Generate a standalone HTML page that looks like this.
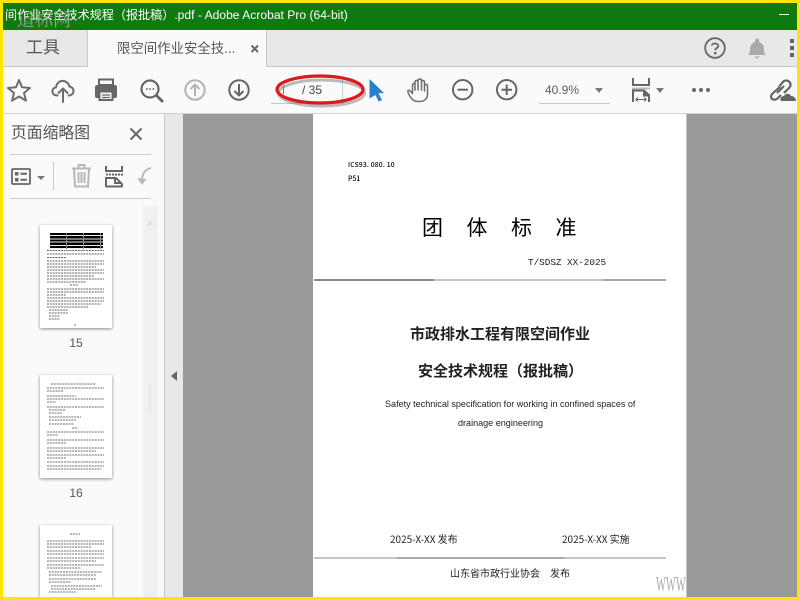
<!DOCTYPE html>
<html lang="zh"><head><meta charset="utf-8"><style>
html,body{margin:0;padding:0;width:800px;height:600px;overflow:hidden;background:#fff}
body{position:relative;font-family:"Liberation Sans","Noto Sans CJK SC",sans-serif;color:#444}
.a{position:absolute;white-space:nowrap}
svg.a{overflow:visible}
.ic{fill:none;stroke:#6d6d6d;stroke-width:2;stroke-linecap:round;stroke-linejoin:round}
</style></head><body>
<!-- base regions -->
<div class="a" style="left:3px;top:3px;width:794px;height:27px;background:#107a10"></div>
<div class="a" style="left:3px;top:30px;width:794px;height:37px;background:#e8e8e8;border-bottom:0"></div>
<div class="a" style="left:3px;top:66px;width:794px;height:1px;background:#c8c8c8"></div>
<div class="a" style="left:3px;top:67px;width:794px;height:46px;background:#fafafa"></div>
<div class="a" style="left:3px;top:113px;width:794px;height:1px;background:#d0d0d0"></div>
<div class="a" style="left:3px;top:114px;width:161px;height:486px;background:#fafafa"></div>
<div class="a" style="left:164px;top:114px;width:1px;height:486px;background:#c8c8c8"></div>
<div class="a" style="left:165px;top:114px;width:18px;height:486px;background:#e8e8e8"></div>
<div class="a" style="left:183px;top:114px;width:614px;height:486px;background:#999"></div>
<div class="a" style="left:313px;top:114px;width:373px;height:486px;background:#fff"></div>
<div class="a" style="left:686px;top:114px;width:1px;height:486px;background:#c4c4c4"></div>

<!-- title -->
<div class="a" style="left:5px;top:5px;width:500px;height:20px;overflow:hidden;font-size:12.100px;line-height:20px;color:#fff">间作业安全技术规程（报批稿）.pdf - Adobe Acrobat Pro (64-bit)</div>
<div class="a" style="left:17px;top:7px;font-size:18px;line-height:24px;color:#a3ada3;opacity:.85;font-family:'Noto Serif CJK SC',serif">道标网</div>
<div class="a" style="left:779px;top:14px;width:10px;height:1px;background:#fff"></div>

<!-- tabs -->
<div class="a" style="left:87px;top:30px;width:180px;height:37px;background:#fafafa;border-left:1px solid #c8c8c8;border-right:1px solid #c8c8c8;box-sizing:border-box"></div>
<div class="a" style="left:26px;top:37px;font-size:17px;line-height:22px;color:#555">工具</div>
<div class="a" style="left:117px;top:39px;font-size:13.4px;line-height:20px;color:#555">限空间作业安全技...</div>
<svg class="a" style="left:250px;top:44px" width="10" height="10"><path d="M1.500 1.500L8 8M8 1.500L1.500 8" stroke="#666" stroke-width="2"/></svg>
<!-- help, bell, dots -->
<svg class="a" style="left:703px;top:36px" width="24" height="24"><circle cx="12" cy="12" r="9.800" fill="none" stroke="#666" stroke-width="1.800"/><path d="M8.800 9.500C9 7 15.300 6.600 15.300 10C15.300 12 12.200 12 12.200 14.300" fill="none" stroke="#666" stroke-width="1.800"/><rect x="11" y="16" width="2.400" height="2.400" fill="#666"/></svg>
<svg class="a" style="left:746px;top:37px" width="22" height="22"><path d="M2 18C4.500 16 4 12.500 4.500 9.500C5 7 7.500 5.500 9 5V3.500C9 1 13 1 13 3.500V5C14.500 5.500 17 7 17.500 9.500C18 12.500 17.500 16 20 18Z" fill="#aaa"/><path d="M8 19.500H14L11 21.500Z" fill="#aaa"/></svg>
<div class="a" style="left:790px;top:39px;width:4px;height:4px;background:#666"></div>
<div class="a" style="left:790px;top:46px;width:4px;height:4px;background:#666"></div>
<div class="a" style="left:790px;top:53px;width:4px;height:4px;background:#666"></div>

<!-- toolbar icons -->
<svg class="a ic" style="left:7px;top:78px" width="25" height="24"><path d="M12 2L15 9.300L23 10L17 15L19 22.700L12 18.500L5 22.700L7 15L1 10L9 9.300Z"/></svg>
<svg class="a ic" style="left:51px;top:78px" width="24" height="24"><path d="M6.500 17.500C2.500 17.500 1 15 1.500 12.500C2 10.500 3.500 9.500 5 9.500C5.500 5 9 2.500 12.500 3C16 3.500 18 6 18.300 8.500C21 8.800 22.800 11 22.500 13.500C22.200 16 20 17.500 17.500 17.500"/><path d="M12 24V11M7.500 15L12 10.500L16.500 15"/></svg>
<svg class="a" style="left:94px;top:78px" width="24" height="24"><path d="M5 1.500H19V7H5Z" fill="none" stroke="#666" stroke-width="2"/><path d="M3 7H21Q23 7 23 9.500V18Q23 20 21 20H19V15H5V20H3Q1 20 1 18V9.500Q1 7 3 7Z" fill="#666"/><path d="M5.500 13.500H18.500V22H5.500Z" fill="#fafafa" stroke="#666" stroke-width="2"/><path d="M8 17H16M8 19.500H16" stroke="#666" stroke-width="1.300"/></svg>
<svg class="a" style="left:140px;top:79px" width="24" height="24"><circle cx="10" cy="10" r="8.500" fill="none" stroke="#666" stroke-width="2.200"/><path d="M16 16L23 23" stroke="#666" stroke-width="2.800"/><path d="M6 10H7.500M9.300 10H10.800M12.600 10H14.100" stroke="#666" stroke-width="1.800"/></svg>
<svg class="a" style="left:184px;top:79px" width="22" height="22" fill="none" stroke="#b4b4b4" stroke-width="2"><circle cx="11" cy="11" r="9.700"/><path d="M11 17V5.500M6.500 10L11 5.500L15.500 10"/></svg>
<svg class="a" style="left:228px;top:79px" width="22" height="22" fill="none" stroke="#666" stroke-width="2"><circle cx="11" cy="11" r="9.700"/><path d="M11 5V16.500M6.500 12L11 16.500L15.500 12"/></svg>

<!-- page box -->
<div class="a" style="left:271px;top:103px;width:72px;height:1px;background:#c8c8c8"></div>
<div class="a" style="left:342px;top:79px;width:1px;height:24px;background:#d0d0d0"></div>
<div class="a" style="left:283px;top:85px;width:1px;height:9px;background:#778"></div>
<div class="a" style="left:302px;top:81px;font-size:12px;line-height:18px;color:#444">/ 35</div>
<svg class="a" style="left:270px;top:72px" width="100" height="40"><ellipse cx="50" cy="18.500" rx="43" ry="13" fill="none" stroke="#777" stroke-width="3" opacity=".5" transform="translate(1.500 2.500)"/><ellipse cx="50" cy="17.500" rx="43" ry="13.500" fill="none" stroke="#e0171c" stroke-width="3.200"/></svg>
<svg class="a" style="left:368px;top:78px" width="18" height="24"><path d="M1.500 1L16 15L10.500 15.300L14 22L10.500 23.500L7.500 17L1.500 20.500Z" fill="#2a7fd0"/></svg>

<svg class="a" style="left:407px;top:78px" width="24" height="24" fill="none" stroke="#6d6d6d" stroke-width="1.500" stroke-linecap="round" stroke-linejoin="round"><path d="M5.500 15.500C4 13.500 2 11.500 1 12.500C.3 13.500 2.500 18.500 5 21C6.500 23 9 23.500 12 23.500C17 23.500 20.500 21 20.500 16.500V8C20.500 5.800 17.500 5.800 17.500 8V4C17.500 2 14.500 2 14.500 4V2.500C14.500 .5 11 .5 11 2.500V4C11 2 8 2 8 4V7C8 5 5.500 5 5.500 7ZM8 4V12M11 3V12M14.500 3V12M17.500 7V13"/></svg>
<svg class="a" style="left:452px;top:79px" width="22" height="22" fill="none" stroke="#666" stroke-width="2"><circle cx="10.700" cy="10.700" r="9.700"/><path d="M5.500 10.700H16"/></svg>
<svg class="a" style="left:496px;top:79px" width="22" height="22" fill="none" stroke="#666" stroke-width="2"><circle cx="10.700" cy="10.700" r="9.700"/><path d="M5.500 10.700H16M10.700 5.500V16"/></svg>
<div class="a" style="left:545px;top:81px;font-size:12px;line-height:18px;color:#5a5a6a">40.9%</div>
<div class="a" style="left:539px;top:103px;width:71px;height:1px;background:#c8c8c8"></div>
<div class="a" style="left:595px;top:88px;width:0;height:0;border-left:4px solid transparent;border-right:4px solid transparent;border-top:5px solid #777"></div>
<svg class="a" style="left:632px;top:77px" width="22" height="26" fill="none" stroke="#666" stroke-width="2"><path d="M1 1V8H17V1"/><path d="M0 11.500H18" stroke="#bbb"/><path d="M1 25V13.500H12L17 18V25"/><path d="M12 13.500V18.500H17" fill="#666"/><path d="M3.500 22.500H14.500M3.500 22.500L6 20.500M3.500 22.500L6 24.500M14.500 22.500L12 20.500M14.500 22.500L12 24.500" stroke-width="1"/></svg>
<div class="a" style="left:656px;top:88px;width:0;height:0;border-left:4px solid transparent;border-right:4px solid transparent;border-top:5px solid #777"></div>
<div class="a" style="left:692px;top:88px;width:4px;height:4px;background:#666;border-radius:50%"></div>
<div class="a" style="left:699px;top:88px;width:4px;height:4px;background:#666;border-radius:50%"></div>
<div class="a" style="left:706px;top:88px;width:4px;height:4px;background:#666;border-radius:50%"></div>
<svg class="a" style="left:769px;top:78px" width="28" height="24" fill="none" stroke="#666" stroke-width="2.200"><path d="M11 9L4 15C1 18 2 20 3 21C5 22 7 22 9 20L12 17"/><path d="M8 15L15 8"/><path d="M10 9L13 5C15 2 18 2 20 3.500C22 5 22 8 20 10L15 15"/><path d="M12 23C10 20 13 18 15 18C16 15 21 15 22 18C25 18 27 20 27 23Z" fill="#666" stroke="none"/></svg>

<!-- sidebar -->
<div class="a" style="left:11px;top:123px;font-size:15.800px;line-height:22px;color:#555">页面缩略图</div>
<svg class="a" style="left:129px;top:127px" width="14" height="14"><path d="M1.500 1.500L12.500 12.500M12.500 1.500L1.500 12.500" stroke="#666" stroke-width="2"/></svg>
<div class="a" style="left:10px;top:154px;width:141px;height:1px;background:#ccc"></div>
<div class="a" style="left:10px;top:198px;width:141px;height:1px;background:#ccc"></div>
<svg class="a" style="left:11px;top:168px" width="20" height="18"><rect x="1" y="1" width="18" height="15" rx="1" fill="none" stroke="#666" stroke-width="1.800"/><rect x="4" y="4" width="3.500" height="3.500" fill="#666"/><rect x="4" y="10" width="3.500" height="3.500" fill="#666"/><path d="M9.500 5.800H16M9.500 11.800H16" stroke="#666" stroke-width="2"/></svg>
<div class="a" style="left:37px;top:176px;width:0;height:0;border-left:4px solid transparent;border-right:4px solid transparent;border-top:4px solid #777"></div>
<div class="a" style="left:53px;top:162px;width:1px;height:28px;background:#ccc"></div>
<svg class="a" style="left:71px;top:164px" width="22" height="24" fill="none" stroke="#b8b8b8" stroke-width="2"><path d="M1 4.500H20M7.500 4V1H13.500V4M3 4.500L4 22.500H17L18 4.500M7.500 8V19M10.500 8V19M13.500 8V19"/></svg>
<svg class="a" style="left:105px;top:165px" width="19" height="23" fill="none" stroke="#666" stroke-width="2"><path d="M1 1V6H17V1"/><path d="M1 9.500H18" stroke-dasharray="2 1"/><path d="M1 22V13H11L17 19V22M1 21.500H17"/><path d="M10 13V18H16"/></svg>
<svg class="a" style="left:137px;top:166px" width="14" height="22" fill="none" stroke="#b8b8b8" stroke-width="2"><path d="M14 2C9 3 5 7 5 14"/><path d="M1 12L5 18L9 13" fill="#b8b8b8" stroke-width="1"/></svg>

<!-- thumb scrollbar -->
<div class="a" style="left:143px;top:206px;width:15px;height:394px;background:#f0f0f0"></div>
<div class="a" style="left:146px;top:220px;width:0;height:0;border-left:4.500px solid transparent;border-right:4.500px solid transparent;border-bottom:5px solid #e3e3e3"></div>
<div class="a" style="left:149px;top:384px;width:2px;height:28px;background:#e8e8e8"></div>

<!-- thumbnails -->
<div class="a" style="left:40px;top:225px;width:72px;height:103px;background:#fff;box-shadow:0 1px 3px rgba(0,0,0,.45)"></div>
<div class="a" style="left:50px;top:233px;width:53px;height:16px;background:repeating-linear-gradient(90deg,transparent 0 16px,#888 16px 17px),repeating-linear-gradient(#000 0 2.200px,#eee 2.200px 3.200px)"></div>
<svg class="a" style="left:46px;top:249px" width="60" height="76" stroke="#333" stroke-width=".9" stroke-dasharray="2 .8" opacity=".75"><path d="M1 1.500H58M1 5H58M1 8.500H20M1 12H58M1 15H58M1 18H50M1 21H58M1 24H58M1 27H48M1 30H58M1 33H40M24 36H32M1 40H58M1 43H58M1 46H20M1 49H58M1 52H58M1 55H55M1 58H42M3 61H22M3 64H22M3 67H14M3 70H14"/><path d="M28 76H30"/></svg>
<div class="a" style="left:40px;top:335px;width:72px;text-align:center;font-size:12px;line-height:16px;color:#555">15</div>

<div class="a" style="left:40px;top:375px;width:72px;height:103px;background:#fff;box-shadow:0 1px 3px rgba(0,0,0,.45)"></div>
<svg class="a" style="left:46px;top:382px" width="60" height="90" stroke="#333" stroke-width=".9" stroke-dasharray="2 .8" opacity=".7"><path d="M5 2H50M1 6H58M1 9H18M1 14H30M1 17H58M1 20H10M1 25H58M3 28H20M3 31H16M3 35H35M3 38H30M3 42H28M26 46H32M1 50H58M1 53H12M1 58H58M1 61H20M1 66H58M1 69H50M1 73H58M1 76H20M1 80H58M1 84H58M1 87H55"/></svg>
<div class="a" style="left:40px;top:485px;width:72px;text-align:center;font-size:12px;line-height:16px;color:#555">16</div>

<div class="a" style="left:40px;top:525px;width:72px;height:75px;background:#fff;box-shadow:0 1px 3px rgba(0,0,0,.45)"></div>
<svg class="a" style="left:46px;top:532px" width="60" height="65" stroke="#333" stroke-width=".9" stroke-dasharray="2 .8" opacity=".7"><path d="M24 2H34M1 9H58M1 12H58M1 15H45M1 19H58M1 22H58M1 26H58M1 29H50M1 33H58M1 36H35M3 40H56M3 43H50M3 47H50M3 50H25M5 54H56M5 57H50M3 60H30"/></svg>

<!-- collapse arrow -->
<div class="a" style="left:171px;top:371px;width:0;height:0;border-top:5.500px solid transparent;border-bottom:5.500px solid transparent;border-right:6px solid #666"></div>

<!-- document -->
<div class="a" style="left:348px;top:159px;font-size:6.700px;line-height:10px;color:#000;font-weight:500;font-family:'Noto Sans CJK SC','Liberation Sans',sans-serif;letter-spacing:.2px">ICS93. 080. 10</div>
<div class="a" style="left:348px;top:173px;font-size:6.900px;line-height:10px;color:#000;font-weight:500;font-family:'Noto Sans CJK SC','Liberation Sans',sans-serif">P51</div>
<div class="a" style="left:422px;top:213px;font-size:21px;line-height:28px;color:#000;font-family:'Noto Sans CJK SC',sans-serif;letter-spacing:23.500px">团体标准</div>
<div class="a" style="left:528px;top:256px;font-size:9.300px;line-height:14px;color:#222;font-family:'Liberation Mono','Noto Sans CJK SC',monospace">T/SDSZ XX-2025</div>
<div class="a" style="left:314px;top:279px;width:352px;height:2px;background:linear-gradient(90deg,#8a8a8a 0 120px,#c4c4c4 120px 288px,#a8a8a8 288px)"></div>
<div class="a" style="left:410px;top:323px;font-size:15px;line-height:22px;font-weight:700;color:#222;font-family:'Noto Sans CJK SC',sans-serif">市政排水工程有限空间作业</div>
<div class="a" style="left:418px;top:360px;font-size:15px;line-height:22px;font-weight:700;color:#222;font-family:'Noto Sans CJK SC',sans-serif">安全技术规程（报批稿）</div>
<div class="a" style="left:385px;top:397px;font-size:9.050px;line-height:14px;color:#222;font-family:'Liberation Sans',sans-serif">Safety technical specification for working in confined spaces of</div>
<div class="a" style="left:458px;top:416px;font-size:9.050px;line-height:14px;color:#222;font-family:'Liberation Sans',sans-serif">drainage engineering</div>
<div class="a" style="left:390px;top:532px;font-size:10px;line-height:14px;color:#222;font-family:'Noto Sans CJK SC',sans-serif">2025-X-XX 发布</div>
<div class="a" style="left:562px;top:532px;font-size:10px;line-height:14px;color:#222;font-family:'Noto Sans CJK SC',sans-serif">2025-X-XX 实施</div>
<div class="a" style="left:314px;top:557px;width:352px;height:2px;background:linear-gradient(90deg,#c4c4c4 0 83px,#aaa 83px 250px,#c4c4c4 250px)"></div>
<div class="a" style="left:450px;top:566px;font-size:10px;line-height:14px;color:#222;font-family:'Noto Sans CJK SC',sans-serif">山东省市政行业协会　发布</div>
<div class="a" style="left:656px;top:573px;font-size:21px;line-height:22px;color:#aaa;font-family:'Liberation Serif',serif;transform-origin:left top;transform:scaleX(.5)">WWW</div>

<!-- yellow frame -->
<div class="a" style="left:0;top:0;width:800px;height:3px;background:#ffe600"></div>
<div class="a" style="left:0;top:597px;width:800px;height:3px;background:#ffe600"></div>
<div class="a" style="left:0;top:0;width:3px;height:600px;background:#ffe600"></div>
<div class="a" style="left:797px;top:0;width:3px;height:600px;background:#ffe600"></div>
</body></html>
